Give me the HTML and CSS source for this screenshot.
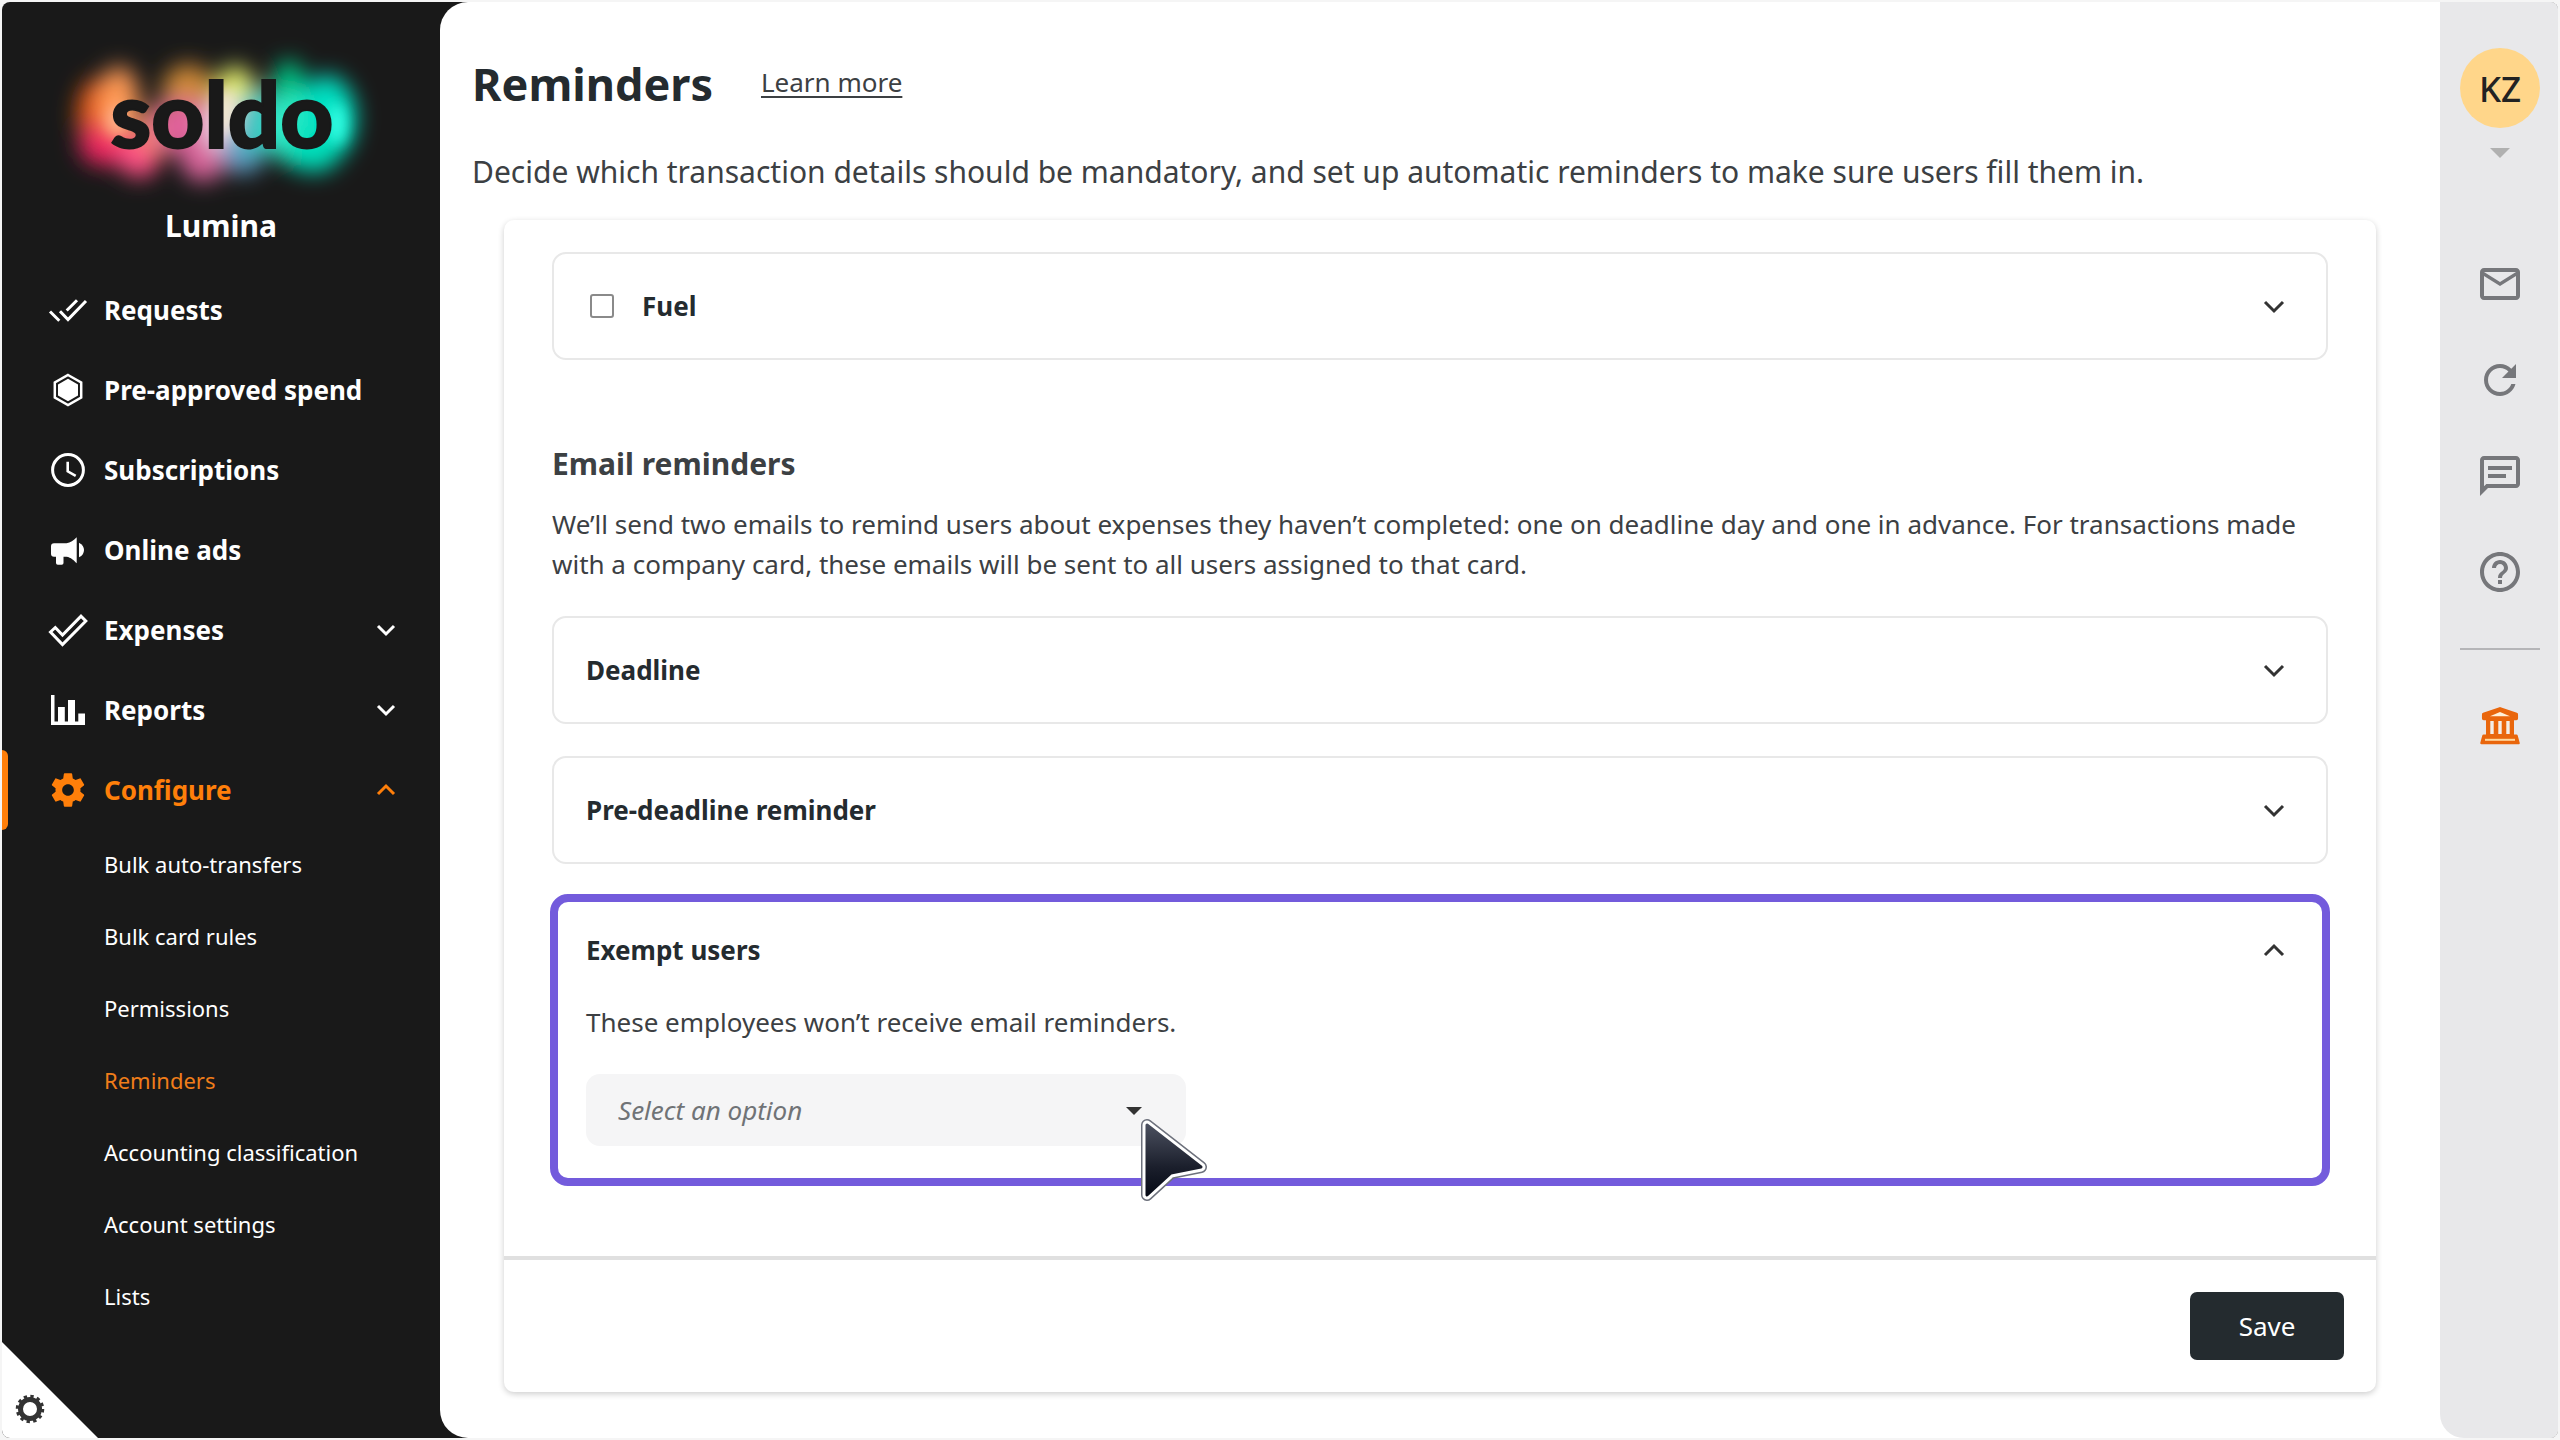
FILE: index.html
```html
<!DOCTYPE html>
<html lang="en">
<head>
  <meta charset="UTF-8" />
  <meta name="viewport" content="width=device-width, initial-scale=1.0" />
  <title>Reminders - Soldo</title>
  <link rel="stylesheet" href="styles.css">
</head>
<body>
  <div class="app">
    <aside class="sidebar">
      <svg class="logo" viewBox="0 0 320 150" role="img" aria-label="soldo">
        <defs>
          <filter id="glow" x="-50%" y="-50%" width="200%" height="200%"><feGaussianBlur stdDeviation="11" /></filter>
          <filter id="soft" x="-50%" y="-50%" width="200%" height="200%"><feGaussianBlur stdDeviation="7" /></filter>
        </defs>
        <g filter="url(#glow)">
          <ellipse cx="38" cy="68" rx="22" ry="36" fill="#e85a12" />
          <ellipse cx="44" cy="98" rx="26" ry="22" fill="#ee2860" />
          <ellipse cx="58" cy="54" rx="20" ry="34" fill="#ff9a55" />
          <ellipse cx="78" cy="108" rx="22" ry="24" fill="#ff4f85" />
          <ellipse cx="100" cy="84" rx="24" ry="24" fill="#f09068" />
          <ellipse cx="127" cy="46" rx="26" ry="28" fill="#d08a38" />
          <ellipse cx="122" cy="80" rx="32" ry="26" fill="#e0609a" />
          <ellipse cx="142" cy="108" rx="24" ry="28" fill="#d9649a" />
          <ellipse cx="174" cy="46" rx="20" ry="26" fill="#e6f06a" />
          <ellipse cx="166" cy="80" rx="24" ry="28" fill="#eed6e8" />
          <ellipse cx="182" cy="106" rx="22" ry="22" fill="#5f9cc4" />
          <ellipse cx="198" cy="76" rx="22" ry="34" fill="#37c3c0" />
          <ellipse cx="228" cy="46" rx="17" ry="32" fill="#00c283" />
          <ellipse cx="234" cy="84" rx="26" ry="36" fill="#30f0c8" />
          <ellipse cx="266" cy="72" rx="29" ry="43" fill="#00e0c2" />
          <ellipse cx="252" cy="104" rx="28" ry="22" fill="#00e0bc" />
        </g>
        <g filter="url(#soft)">
          <ellipse cx="56" cy="74" rx="10" ry="16" fill="#ffb08a" />
          <ellipse cx="164" cy="66" rx="8" ry="22" fill="#f4eccf" />
          <ellipse cx="276" cy="78" rx="9" ry="20" fill="#35ffe4" />
        </g>
        <text class="logo-text" x="161" y="102" text-anchor="middle">soldo</text>
      </svg>
      <div class="company">Lumina</div>

      <nav>
        <ul class="menu">
          <li>
            <a class="menu-item" href="#">
              <svg class="menu-icon" viewBox="0 0 40 40" fill="none" stroke="currentColor" stroke-width="3">
                <path d="M2 21.5l9.3 9.3M12 21.3l8 8.3L38 11M18.7 20.5L29 10.3" />
              </svg>
              <span>Requests</span>
            </a>
          </li>
          <li>
            <a class="menu-item" href="#">
              <svg class="menu-icon" viewBox="0 0 40 40">
                <path d="M20 5l13.2 7.5v15L20 35 6.8 27.5v-15z" fill="none" stroke="currentColor" stroke-width="2.5" />
                <path d="M20 8.800l10 5.700v11L20 31.200l-10-5.700v-11z" fill="currentColor" />
              </svg>
              <span>Pre-approved spend</span>
            </a>
          </li>
          <li>
            <a class="menu-item" href="#">
              <svg class="menu-icon" viewBox="0 0 40 40" fill="none" stroke="currentColor" stroke-width="3">
                <circle cx="20" cy="20" r="15.4" />
                <path d="M19.700 11.700v9.600l8 4.500" stroke-width="2.600" />
              </svg>
              <span>Subscriptions</span>
            </a>
          </li>
          <li>
            <a class="menu-item" href="#">
              <svg class="menu-icon" viewBox="0 0 40 40" fill="currentColor">
                <path d="M6 13.300h12.500c4-.5 7-3 10.200-6v26c-3.200-3-5.500-5.800-10.200-6.500h-3V33a1.800 1.800 0 0 1-1.800 1.800H9.800A1.800 1.800 0 0 1 8 33v-6.200H6a3 3 0 0 1-3-3v-7.500a3 3 0 0 1 3-3z" />
                <path d="M31 12.700c3.500 1.500 5 4.500 5 7.300s-1.500 5.800-5 7.300z" />
              </svg>
              <span>Online ads</span>
            </a>
          </li>
          <li>
            <a class="menu-item" href="#">
              <svg class="menu-icon" viewBox="0 0 40 40" fill="none" stroke="currentColor" stroke-width="3">
                <path d="M2.500 22l4.800-4.500 7.200 7.500L33 6.200l4.800 4.800-23.300 23.500z" />
              </svg>
              <span>Expenses</span>
              <svg class="chevron" viewBox="0 0 24 24"><path d="M4 8l8 8 8-8" /></svg>
            </a>
          </li>
          <li>
            <a class="menu-item" href="#">
              <svg class="menu-icon" viewBox="0 0 40 40" fill="currentColor">
                <path d="M3 5h3.500v26.500H10V17h6.800v14.500H20V10h7v21.500h3.300v-8H37V35H3z" />
              </svg>
              <span>Reports</span>
              <svg class="chevron" viewBox="0 0 24 24"><path d="M4 8l8 8 8-8" /></svg>
            </a>
          </li>
          <li>
            <a class="menu-item active" href="#">
              <svg class="menu-icon" viewBox="0 0 24 24" fill="currentColor">
                <path d="M19.430 12.980c.04-.32.07-.64.07-.98s-.03-.66-.07-.98l2.110-1.650c.19-.15.24-.42.12-.64l-2-3.460c-.12-.22-.39-.3-.61-.22l-2.490 1c-.52-.4-1.080-.73-1.690-.98l-.38-2.650C14.460 2.180 14.250 2 14 2h-4c-.25 0-.46.18-.49.42l-.38 2.650c-.61.25-1.170.59-1.690.98l-2.490-1c-.23-.09-.49 0-.61.22l-2 3.460c-.13.22-.07.49.12.64l2.110 1.650c-.04.32-.07.65-.07.98s.03.66.07.98l-2.110 1.650c-.19.15-.24.42-.12.64l2 3.460c.12.22.39.3.61.22l2.490-1c.52.4 1.080.73 1.690.98l.38 2.650c.03.24.24.42.49.42h4c.25 0 .46-.18.49-.42l.38-2.650c.61-.25 1.170-.59 1.690-.98l2.490 1c.23.09.49 0 .61-.22l2-3.460c.12-.22.07-.49-.12-.64l-2.110-1.650zM12 15.500c-1.930 0-3.500-1.570-3.500-3.500s1.570-3.500 3.500-3.500 3.500 1.570 3.500 3.500-1.570 3.500-3.500 3.500z" />
              </svg>
              <span>Configure</span>
              <svg class="chevron" viewBox="0 0 24 24"><path d="M4 16l8-8 8 8" /></svg>
            </a>
            <ul class="submenu">
              <li><a href="#">Bulk auto-transfers</a></li>
              <li><a href="#">Bulk card rules</a></li>
              <li><a href="#">Permissions</a></li>
              <li><a class="current" href="#">Reminders</a></li>
              <li><a href="#">Accounting classification</a></li>
              <li><a href="#">Account settings</a></li>
              <li><a href="#">Lists</a></li>
            </ul>
          </li>
        </ul>
      </nav>

      <button class="corner" aria-label="Cookie settings">
        <svg viewBox="0 0 32 32" fill="none" stroke="#333">
          <circle cx="16" cy="16" r="9.500" stroke-width="5" />
          <circle cx="16" cy="16" r="12.500" stroke-width="3.500" stroke-dasharray="3.270 3.270" />
        </svg>
      </button>
    </aside>

    <div class="content">
      <main class="main">
        <header class="page-header">
          <h1>Reminders</h1>
          <a href="#">Learn more</a>
        </header>
        <p class="intro">Decide which transaction details should be mandatory, and set up automatic reminders to make sure users fill them in.</p>

        <form class="panel">
          <div class="panel-body">
            <div class="card">
              <div class="card-head">
                <input type="checkbox" id="fuel">
                <label for="fuel">Fuel</label>
                <button type="button" class="toggle" aria-label="Open Fuel">
                  <svg class="chevron" viewBox="0 0 24 24"><path d="M3 8l9 9 9-9" /></svg>
                </button>
              </div>
            </div>

            <h2>Email reminders</h2>
            <p class="text">We’ll send two emails to remind users about expenses they haven’t completed: one on deadline day and one in advance. For transactions made with a company card, these emails will be sent to all users assigned to that card.</p>

            <div class="cards">
              <div class="card">
                <div class="card-head">
                  <h3>Deadline</h3>
                  <button type="button" class="toggle" aria-label="Open Deadline">
                    <svg class="chevron" viewBox="0 0 24 24"><path d="M3 8l9 9 9-9" /></svg>
                  </button>
                </div>
              </div>
              <div class="card">
                <div class="card-head">
                  <h3>Pre-deadline reminder</h3>
                  <button type="button" class="toggle" aria-label="Open Pre-deadline reminder">
                    <svg class="chevron" viewBox="0 0 24 24"><path d="M3 8l9 9 9-9" /></svg>
                  </button>
                </div>
              </div>
              <div class="card highlight">
                <div class="card-head">
                  <h3>Exempt users</h3>
                  <button type="button" class="toggle" aria-label="Close Exempt users">
                    <svg class="chevron" viewBox="0 0 24 24"><path d="M3 17l9-9 9 9" /></svg>
                  </button>
                </div>
                <div class="card-body">
                  <label class="text" for="exempt">These employees won’t receive email reminders.</label>
                  <div class="select-wrap">
                    <select id="exempt">
                      <option>Select an option</option>
                    </select>
                    <span class="select-caret"></span>
                    <svg class="pointer" viewBox="0 0 68 84">
                      <defs>
                        <linearGradient id="arrow" x1="0" y1="0" x2="0" y2="1">
                          <stop offset="0" stop-color="#4a4f5e" />
                          <stop offset="0.6" stop-color="#1b1f2c" />
                          <stop offset="1" stop-color="#060a16" />
                        </linearGradient>
                      </defs>
                      <path d="M7 7L61 49 31 55 7 77z" fill="#6d717c" stroke="#6d717c" stroke-width="12" stroke-linejoin="round" />
                      <path d="M7 7L61 49 31 55 7 77z" fill="#fff" stroke="#fff" stroke-width="9" stroke-linejoin="round" />
                      <path d="M7 7L61 49 31 55 7 77z" fill="url(#arrow)" stroke="url(#arrow)" stroke-width="3" stroke-linejoin="round" />
                    </svg>
                  </div>
                </div>
              </div>
            </div>
          </div>
          <footer class="panel-footer">
            <button type="button" class="save">Save</button>
          </footer>
        </form>
      </main>

      <aside class="rail">
        <button class="avatar">KZ</button>
        <span class="rail-caret"></span>
        <div class="rail-icons">
          <button aria-label="Messages">
            <svg viewBox="0 0 24 24"><path d="M20 4H4c-1.100 0-1.990.9-1.990 2L2 18c0 1.100.9 2 2 2h16c1.100 0 2-.9 2-2V6c0-1.100-.9-2-2-2zm0 14H4V8l8 5 8-5v10zm-8-7L4 6h16l-8 5z" /></svg>
          </button>
          <button aria-label="Refresh">
            <svg viewBox="0 0 24 24"><path d="M17.650 6.350C16.200 4.900 14.210 4 12 4c-4.420 0-7.990 3.580-7.990 8s3.570 8 7.990 8c3.730 0 6.840-2.550 7.730-6h-2.080c-.82 2.330-3.040 4-5.650 4-3.310 0-6-2.690-6-6s2.690-6 6-6c1.660 0 3.140.69 4.220 1.780L13 11h7V4l-2.350 2.350z" /></svg>
          </button>
          <button aria-label="Chat">
            <svg viewBox="0 0 24 24"><path d="M4 4h16v12H5.170L4 17.170V4m0-2c-1.100 0-1.990.9-1.990 2L2 22l4-4h14c1.100 0 2-.9 2-2V4c0-1.100-.9-2-2-2H4zm2 9h9v2H6v-2zm0-4h12v2H6V7z" /></svg>
          </button>
          <button aria-label="Help">
            <svg viewBox="0 0 24 24"><path d="M11 18h2v-2h-2v2zm1-16C6.480 2 2 6.480 2 12s4.480 10 10 10 10-4.480 10-10S17.520 2 12 2zm0 18c-4.410 0-8-3.590-8-8s3.590-8 8-8 8 3.590 8 8-3.590 8-8 8zm0-14c-2.210 0-4 1.790-4 4h2c0-1.100.9-2 2-2s2 .9 2 2c0 2-3 1.750-3 5h2c0-2.250 3-2.500 3-5 0-2.210-1.790-4-4-4z" /></svg>
          </button>
        </div>
        <hr>
        <button class="bank" aria-label="Company account">
          <svg viewBox="0 0 40 40">
            <path d="M3.700 8.500L20 2.800l16.300 5.700v4H3.700z" fill="#e9660c" stroke="#e9660c" stroke-width="3.500" stroke-linejoin="round" />
            <path d="M10 10.200l10-4.200 10 4.200z" fill="#fff0d8" />
            <path d="M6 14h28v15H6z" fill="#e9660c" />
            <path d="M10.300 15h3.400v13h-3.400zM18.300 15h3.400v13h-3.400zM26.300 15h3.400v13h-3.400z" fill="#f3eee9" />
            <path d="M3.500 29.800h33l2 7.200h-37z" fill="#e9660c" stroke="#e9660c" stroke-width="2.500" stroke-linejoin="round" />
            <path d="M5 32.800h30v2H5z" fill="#ffd9a0" />
          </svg>
        </button>
      </aside>
    </div>
  </div>
</body>
</html>
```
FILE: styles.css
```css
* {
  box-sizing: border-box;
}
body {
  margin: 0;
  padding: 2px;
  background: #f5f5f5;
  font-family: 'Noto Sans', 'Open Sans', sans-serif;
  font-size: 26px;
  color: #3c4043;
}
ul {
  list-style: none;
  margin: 0;
  padding: 0;
}
a {
  color: inherit;
  text-decoration: none;
}
button {
  font-family: inherit;
  border: none;
  background: none;
  padding: 0;
  cursor: pointer;
}
svg {
  display: block;
}
.app {
  display: flex;
  min-height: calc(100vh - 4px);
  border-radius: 8px;
  overflow: hidden;
  background: #191919;
}

/* left menu */
.sidebar {
  position: relative;
  width: 438px;
  flex-shrink: 0;
  padding-top: 44px;
  color: #fff;
}
.logo {
  width: 320px;
  margin: 0 auto;
  overflow: visible;
}
.logo-text {
  font-family: Lato, sans-serif;
  font-weight: 900;
  font-size: 92px;
  fill: #191919;
  stroke: #191919;
  stroke-width: 2px;
}
.company {
  margin: 10px 0 24px;
  text-align: center;
  font-size: 30px;
  font-weight: 700;
  line-height: 40px;
}
.menu-item {
  display: flex;
  align-items: center;
  gap: 16px;
  height: 80px;
  padding: 0 42px 0 46px;
  font-size: 26px;
  font-weight: 700;
}
.menu-icon {
  width: 40px;
  height: 40px;
}
.chevron {
  width: 24px;
  height: 24px;
  margin-left: auto;
  fill: none;
  stroke: currentColor;
  stroke-width: 3px;
}
.menu-item.active {
  position: relative;
  color: #ff7f0a;
}
.menu-item.active::before {
  content: "";
  position: absolute;
  left: 0;
  width: 6px;
  height: 80px;
  border-radius: 0 6px 6px 0;
  background: #ff7f0a;
}
.submenu {
  margin-top: -2px;
}
.submenu a {
  display: block;
  padding-left: 102px;
  font-size: 22px;
  line-height: 72px;
}
.submenu .current {
  color: #f07d1a;
}
.corner {
  position: absolute;
  left: 0;
  bottom: 0;
  width: 96px;
  height: 96px;
  background: #fff;
  clip-path: polygon(0 0, 100% 100%, 0 100%);
}
.corner svg {
  width: 32px;
  margin: 38px 0 0 12px;
}

/* page */
.content {
  display: flex;
  flex: 1;
  background: #fff;
  border-radius: 28px 0 0 28px;
}
.main {
  flex: 1;
  padding: 46px 64px 44px 32px;
}
.page-header {
  display: flex;
  align-items: center;
  gap: 48px;
}
h1 {
  margin: 0;
  font-size: 45px;
  line-height: 72px;
  color: #242b2f;
}
.page-header a {
  margin-bottom: 4px;
  font-size: 26px;
  text-decoration: underline;
  text-decoration-thickness: 2px;
  text-underline-offset: 4px;
}
.intro {
  margin: 28px 0 24px;
  font-size: 30px;
  line-height: 48px;
}
.panel {
  margin-left: 32px;
  border-radius: 10px;
  box-shadow: 0 2px 6px rgba(0, 0, 0, 0.2);
}
.panel-body {
  padding: 32px 48px 72px;
}
.card {
  border: 2px solid #e8e8e8;
  border-radius: 14px;
}
.card-head {
  display: flex;
  align-items: center;
  height: 104px;
  padding: 0 40px 0 32px;
}
.card-head label,
h3 {
  margin: 0;
  font-size: 26px;
  font-weight: 700;
  color: #242b2f;
}
.card-head input {
  appearance: none;
  width: 24px;
  height: 24px;
  margin: 0 28px 0 4px;
  border: 2px solid #8a8a8a;
  border-radius: 3px;
}
.toggle {
  margin-left: auto;
  color: #333;
}
h2 {
  margin: 82px 0 18px;
  font-size: 30px;
  line-height: 44px;
}
.text {
  font-size: 26px;
  line-height: 40px;
}
p.text {
  margin: 0 0 32px;
}
.cards {
  display: grid;
  gap: 32px;
}
.card.highlight {
  margin: -2px;
  border: 8px solid #735bdc;
  border-radius: 18px;
}
.highlight .card-head {
  height: 96px;
  padding: 0 36px 0 28px;
}
.card-body {
  padding: 4px 28px 32px;
}
.card-body label {
  display: block;
  margin-bottom: 32px;
}
.select-wrap {
  position: relative;
  width: 600px;
}
.select-wrap select {
  appearance: none;
  width: 100%;
  height: 72px;
  padding: 0 32px;
  border: none;
  border-radius: 14px;
  background: #f5f5f6;
  color: #707376;
  font: italic 26px 'Noto Sans', 'Open Sans', sans-serif;
}
.select-caret {
  position: absolute;
  right: 44px;
  top: 33px;
  border: 8px solid transparent;
  border-top: 8px solid #333;
  border-bottom: none;
}
.pointer {
  position: absolute;
  left: 554px;
  top: 44px;
  width: 68px;
  height: 84px;
}
.panel-footer {
  display: flex;
  justify-content: flex-end;
  padding: 32px;
  border-top: 4px solid #e0e0e0;
}
.save {
  min-width: 154px;
  height: 68px;
  border-radius: 7px;
  background: #242b2f;
  color: #fff;
  font-size: 26px;
}

/* right rail */
.rail {
  display: flex;
  flex-direction: column;
  align-items: center;
  width: 118px;
  padding: 46px 0 0 2px;
  background: #e8e8ea;
  border-radius: 0 0 0 24px;
}
.avatar {
  width: 80px;
  height: 80px;
  border-radius: 50%;
  background: #ffd68a;
  color: #222;
  font-size: 35px;
  font-weight: 500;
}
.rail-caret {
  margin: 20px 0 102px;
  border: 10px solid transparent;
  border-top-color: #b0b0b0;
  border-bottom: none;
}
.rail-icons {
  display: grid;
  gap: 48px;
}
.rail-icons svg {
  width: 48px;
  height: 48px;
  fill: #76777b;
}
.rail hr {
  width: 80px;
  height: 2px;
  margin: 52px 0 56px;
  border: none;
  background: #b5b5b8;
}
.bank svg {
  width: 40px;
  height: 40px;
}
```
